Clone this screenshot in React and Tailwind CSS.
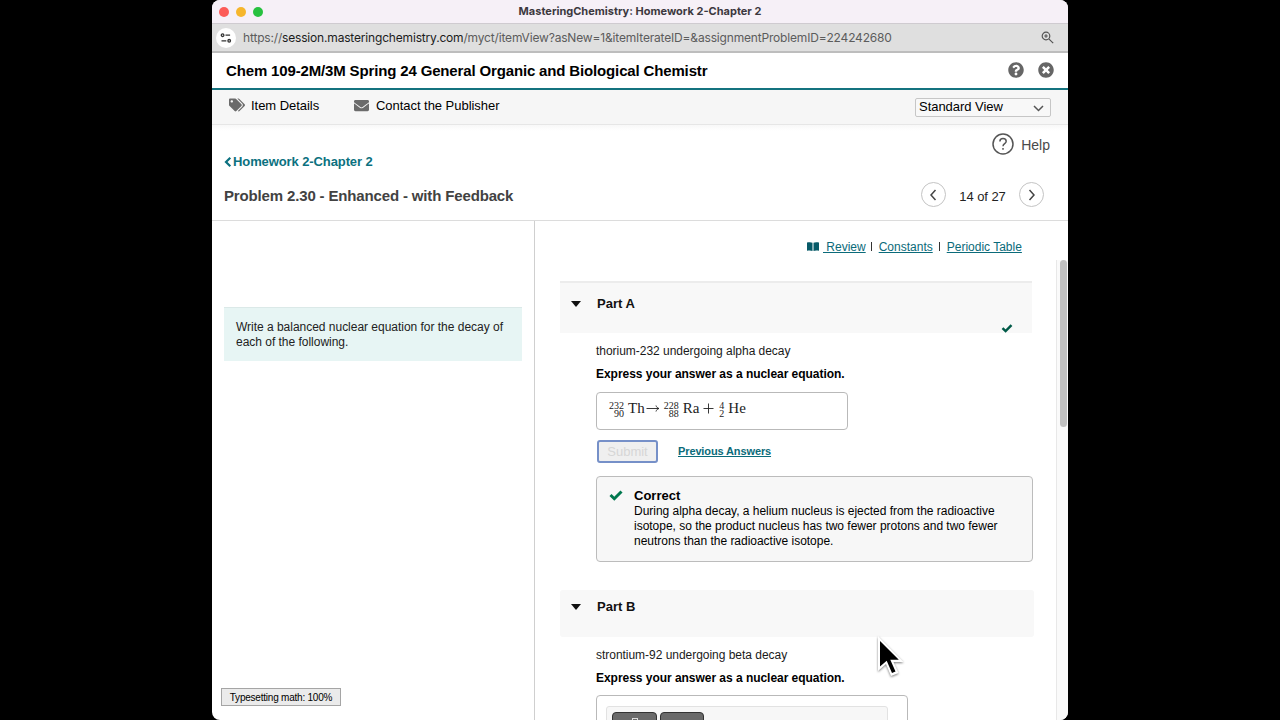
import React from "react";
import { FaTags, FaEnvelope, FaQuestionCircle, FaTimesCircle } from "react-icons/fa";

function TitleBar() {
  return (
    <div className="relative flex h-6 shrink-0 items-center justify-center border-b border-[#cfcbd0] bg-[#f6f0f7]">
      <div className="absolute top-[7px] left-[7px] flex gap-[7px]">
        <span className="h-[10px] w-[10px] rounded-full bg-[#fc5b57]" />
        <span className="h-[10px] w-[10px] rounded-full bg-[#f6b62c]" />
        <span className="h-[10px] w-[10px] rounded-full bg-[#27c13f]" />
      </div>
      <span className="font-['Inter',sans-serif] text-[11px] font-bold text-[#3c383e]">
        MasteringChemistry: Homework 2-Chapter 2
      </span>
    </div>
  );
}

function AddressBar() {
  return (
    <div className="flex h-[28.5px] shrink-0 items-center border-b-2 border-[#bdbdbd] bg-[#dfdfdf] pt-[1px] pr-[14px] pl-1">
      <span className="flex h-5 w-5 items-center justify-center rounded-full bg-white">
        <svg width="12" height="12" viewBox="0 0 12 12" fill="none" stroke="#333" strokeWidth="1.3">
          <circle cx="2.6" cy="3.200" r="1.300" />
          <path d="M5.500 3.200h4.600M1.500 8.800h4.800" />
          <circle cx="9.200" cy="8.800" r="1.300" />
        </svg>
      </span>
      <span className="ml-[7px] font-['Inter',sans-serif] text-[12px] tracking-[-0.175px] whitespace-nowrap text-[#5c5c5c]">
        https://<span className="text-[#1c1c1c]">session.masteringchemistry.com</span>
        /myct/itemView?asNew=1&amp;itemIterateID=&amp;assignmentProblemID=224242680
      </span>
      <svg className="ml-auto" width="13" height="13" viewBox="0 0 13 13" fill="none" stroke="#555" strokeWidth="1.2">
        <circle cx="5" cy="5" r="3.8" />
        <path d="M7.8 7.8l4.4 4.4M3.2 5h3.6M5 3.2v3.6" />
      </svg>
    </div>
  );
}

function CourseHeader() {
  return (
    <div className="flex h-[37.5px] shrink-0 items-center border-b-2 border-[#14737f] bg-white pr-[14px] pl-[14px]">
      <span className="mt-[2px] text-[15px] tracking-[-0.15px] font-bold whitespace-nowrap text-black">
        Chem 109-2M/3M Spring 24 General Organic and Biological Chemistr
      </span>
      <div className="ml-auto flex gap-[14px] text-[16px] text-[#666]">
        <FaQuestionCircle />
        <FaTimesCircle />
      </div>
    </div>
  );
}

function Toolbar() {
  return (
    <div className="flex h-[35px] shrink-0 items-center border-b border-[#e6e6e6] bg-[#f6f6f6] pr-[17px] pl-[17px] text-[13px] tracking-[-0.04px] text-black">
      <FaTags className="mb-[4px] text-[16px] text-[#6b6b6b]" />
      <span className="mb-[2px] ml-[6px] w-[103px]">Item Details</span>
      <FaEnvelope className="mb-[3px] text-[15px] text-[#6b6b6b]" />
      <span className="mb-[2px] ml-[7px] whitespace-nowrap">Contact the Publisher</span>
      <div className="ml-auto flex h-[19px] w-[136px] items-center justify-between rounded-[2px] border border-[#c6c6c6] bg-[#f8f8f8] pr-[6px] pl-[3px]">
        <span>Standard View</span>
        <svg className="mt-[2px]" width="11" height="7" viewBox="0 0 11 7" fill="none" stroke="#555" strokeWidth="1.5">
          <path d="M1 1l4.500 4.500L10 1" />
        </svg>
      </div>
    </div>
  );
}

function PagerButton({ d }) {
  return (
    <span className="flex h-[25px] w-[25px] items-center justify-center rounded-full border border-[#c4c4c4] bg-white">
      <svg width="7" height="12" viewBox="0 0 7 12" fill="none" stroke="#444" strokeWidth="1.5">
        <path d={d} />
      </svg>
    </span>
  );
}

function ProblemHeader() {
  return (
    <div className="flex h-[96px] shrink-0 justify-between border-b border-[#dcdcdc] bg-gradient-to-b from-[#f8f8f8] via-white via-[6%] to-white pr-[18px] pl-3">
      <div className="flex flex-col pt-[28px]">
        <div className="flex h-[18px] items-center text-[13px] tracking-[-0.1px] font-bold text-[#0b7180]">
          <svg className="mr-[1px]" width="8" height="10" viewBox="0 0 8 10" fill="none" stroke="#0b7180" strokeWidth="2.200">
            <path d="M6.300 0.800L2 5l4.300 4.200" />
          </svg>
          <span className="whitespace-nowrap">Homework 2-Chapter 2</span>
        </div>
        <h1 className="mt-[15px] text-[15px] leading-[20px] tracking-[-0.15px] font-bold whitespace-nowrap text-[#424242]">
          Problem 2.30 - Enhanced - with Feedback
        </h1>
      </div>
      <div className="flex flex-col items-end">
        <div className="mt-[8px] flex h-[22px] items-center gap-[7px] text-[14px] text-[#4a4a4a]">
          <svg width="22" height="22" viewBox="0 0 22 22" fill="none" stroke="#555" strokeWidth="1.500">
            <circle cx="11" cy="11" r="10" />
            <path d="M7.900 8.400c0-1.900 1.300-3 3.100-3s3.200 1.100 3.200 2.800c0 2.400-3.200 2.500-3.200 5" />
            <path d="M11 15v1.700" />
          </svg>
          <span className="mt-[2px]">Help</span>
        </div>
        <div className="mt-[27px] mr-[6px] flex h-[25px] items-center text-[13px] tracking-[-0.06px] text-[#222]">
          <PagerButton d="M5.500 1L1 6l4.500 5" />
          <span className="mt-[4px] w-[73px] text-center">14 of 27</span>
          <PagerButton d="M1.500 1L6 6l-4.500 5" />
        </div>
      </div>
    </div>
  );
}

function Triangle() {
  return (
    <svg width="10" height="6" viewBox="0 0 10 6" fill="#111">
      <path d="M0 0h10L5 6z" />
    </svg>
  );
}

function CheckMark({ className }) {
  return (
    <svg className={className} viewBox="0 0 14 11" fill="none" stroke="currentColor" strokeWidth="3">
      <path d="M1.500 5l3.800 3.700L12.500 1.500" />
    </svg>
  );
}

function PartHeader({ title, className, done }) {
  return (
    <div className={"relative flex items-start bg-[#f8f8f8] pl-[11px] " + className}>
      <div className="flex h-[18px] items-center">
        <Triangle />
        <h2 className="ml-4 text-[13px] font-bold text-[#111]">{title}</h2>
      </div>
      {done && <CheckMark className="absolute top-[41px] right-[19px] h-[9px] w-[12px] text-[#005a48]" />}
    </div>
  );
}

function Nuclide({ mass, number, symbol }) {
  return (
    <span className="flex items-start">
      <span className="mt-px flex flex-col items-end text-[10px] leading-[8px]">
        <span>{mass}</span>
        <span>{number}</span>
      </span>
      <span className="ml-[4px]">{symbol}</span>
    </span>
  );
}

function Equation() {
  return (
    <div className="flex h-[38px] w-[252px] items-start rounded-[4px] border border-[#b9b9b9] bg-white pt-[8px] pl-3 font-['Liberation_Serif',serif] text-[15px] leading-[15px] text-[#222]">
      <Nuclide mass="232" number="90" symbol="Th" />
      <svg className="mt-[3px] mr-[4px] ml-px" width="14" height="8" viewBox="0 0 14 8" fill="none" stroke="#222" strokeWidth="0.900">
        <path d="M0.500 4.500h12.500M10 1.500c0.500 1.700 1.500 2.600 3 3c-1.500 0.400-2.500 1.300-3 3" />
      </svg>
      <Nuclide mass="228" number="88" symbol="Ra" />
      <svg className="mt-[2px] mr-[5px] ml-[4px]" width="11" height="11" viewBox="0 0 11 11" stroke="#222" strokeWidth="0.900">
        <path d="M0.500 5.500h10M5.500 0.500v10" />
      </svg>
      <Nuclide mass="4" number="2" symbol="He" />
    </div>
  );
}

function PartA() {
  return (
    <section className="mt-[25px]">
      <PartHeader title="Part A" done className="h-[52px] w-[472px] border-t-2 border-[#ececec] pt-[12px]" />
      <div className="pl-9 text-[#1a1a1a]">
        <p className="mt-[9px] text-[12px] leading-[18px] tracking-[-0.03px]">thorium-232 undergoing alpha decay</p>
        <p className="mt-[5px] mb-[9px] text-[12px] leading-[18px] tracking-[-0.035px] font-bold text-black">
          Express your answer as a nuclear equation.
        </p>
        <Equation />
        <div className="mt-[10px] flex items-center pl-[1px]">
          <span className="flex h-[23px] w-[61px] items-center justify-center rounded-[3px] border-2 border-[#7690c8] bg-[#efefef] text-[13px] text-[#d6d6d6]">
            Submit
          </span>
          <a className="mb-px ml-5 text-[11px] tracking-[-0.12px] font-bold whitespace-nowrap text-[#0b6b7a] underline">
            Previous Answers
          </a>
        </div>
        <div className="mt-[13px] flex h-[86px] w-[437px] rounded-[4px] border border-[#bcbcbc] bg-[#f7f7f7] pt-[11px] pl-3">
          <CheckMark className="mt-[2px] h-[11px] w-[14px] text-[#00784e]" />
          <div className="ml-[11px]">
            <p className="text-[13px] leading-[16px] font-bold text-black">Correct</p>
            <p className="text-[12px] leading-[15px] tracking-[-0.02px] whitespace-nowrap text-black">
              During alpha decay, a helium nucleus is ejected from the radioactive
              <br />
              isotope, so the product nucleus has two fewer protons and two fewer
              <br />
              neutrons than the radioactive isotope.
            </p>
          </div>
        </div>
      </div>
    </section>
  );
}

function PartB() {
  return (
    <section className="mt-[28px]">
      <PartHeader title="Part B" className="h-[47px] w-[474px] rounded-[3px] pt-[8px]" />
      <div className="pl-9 text-[#1a1a1a]">
        <p className="mt-[9px] text-[12px] leading-[18px] tracking-[-0.03px]">strontium-92 undergoing beta decay</p>
        <p className="mt-[5px] mb-[8px] text-[12px] leading-[18px] tracking-[-0.035px] font-bold text-black">
          Express your answer as a nuclear equation.
        </p>
        <div className="h-[80px] w-[312px] rounded-[4px] border border-[#b9b9b9] bg-white pt-[10px] pl-[9px]">
          <div className="flex h-[50px] w-[282px] gap-[3px] rounded-[3px] border border-[#e2e2e2] bg-[#f7f7f7] pt-[5px] pl-[5px]">
            <span className="flex h-[30px] w-[45px] justify-center rounded-[4px] border border-[#333] bg-[#6a6a6a] pt-[5px]">
              <span className="h-[7px] w-[6px] border border-[#ddd]" />
            </span>
            <span className="h-[30px] w-[44px] rounded-[4px] border border-[#333] bg-[#6a6a6a]" />
          </div>
        </div>
      </div>
    </section>
  );
}

function Resources() {
  return (
    <div className="flex items-center pt-[17px] pl-[247px] text-[12px] leading-[18px] text-[#0b6b7a]">
      <svg className="mb-px" width="12" height="9" viewBox="0 0 12 9" fill="#075a68">
        <path d="M0 0.600C2 0 4 0 5.500 0.700V9C4 8.300 2 8.300 0 8.800zM12 0.600C10 0 8 0 6.500 0.700V9C8 8.300 10 8.300 12 8.800z" />
      </svg>
      <a className="ml-[4px] whitespace-pre underline"> Review</a>
      <span className="mr-[7px] mb-px ml-[5px] h-[9px] w-px bg-[#333]" />
      <a className="underline">Constants</a>
      <span className="mr-[7px] mb-px ml-[6px] h-[9px] w-px bg-[#333]" />
      <a className="whitespace-nowrap underline">Periodic Table</a>
    </div>
  );
}

export default function App() {
  return (
    <div className="relative flex h-[720px] w-[1280px] justify-center overflow-hidden bg-black font-['Liberation_Sans',Arial,sans-serif]">
      <div className="flex h-[720px] w-[856px] flex-col overflow-hidden rounded-[8px] bg-white">
        <TitleBar />
        <AddressBar />
        <CourseHeader />
        <Toolbar />
        <ProblemHeader />
        <div className="flex min-h-0 flex-1">
          <div className="flex w-[323px] shrink-0 flex-col border-r border-[#cfcfcf] px-3 pt-[86px]">
            <div className="h-[54px] w-[298px] border-t border-[#dbe9e8] bg-[#e7f5f4] pt-3 pl-3 text-[12px] leading-[15px] tracking-[-0.02px] whitespace-nowrap text-[#222]">
              Write a balanced nuclear equation for the decay of
              <br />
              each of the following.
            </div>
            <div className="mt-auto mb-[14px] ml-[-3px] flex h-[18px] w-[120px] items-center justify-center border border-[#a5a5a5] bg-[#ebebeb] text-[10px] tracking-[-0.22px] whitespace-nowrap text-black">
              Typesetting math: 100%
            </div>
          </div>
          <div className="min-w-0 flex-1 overflow-hidden pl-[25px]">
            <Resources />
            <PartA />
            <PartB />
          </div>
          <div className="mt-[39px] w-[12px] shrink-0 border-l border-[#e8e8e8] bg-[#fafafa] pl-[3px]">
            <div className="h-[167px] w-[7px] rounded-full bg-[#c1c1c1]" />
          </div>
        </div>
      </div>
      <svg
        className="absolute top-[634px] left-[874px] drop-shadow-[0_1px_1px_rgba(0,0,0,0.5)]"
        width="34"
        height="46"
        viewBox="0 0 34 46"
      >
        <path d="M4 2v35l8-7l5 12l7.500-3l-5-11h10z" fill="#fff" />
        <path d="M6 7v25.500l6.700-5.700l5.300 12.200l3.500-1.500l-5.200-11.700h8.500z" fill="#000" />
      </svg>
    </div>
  );
}
